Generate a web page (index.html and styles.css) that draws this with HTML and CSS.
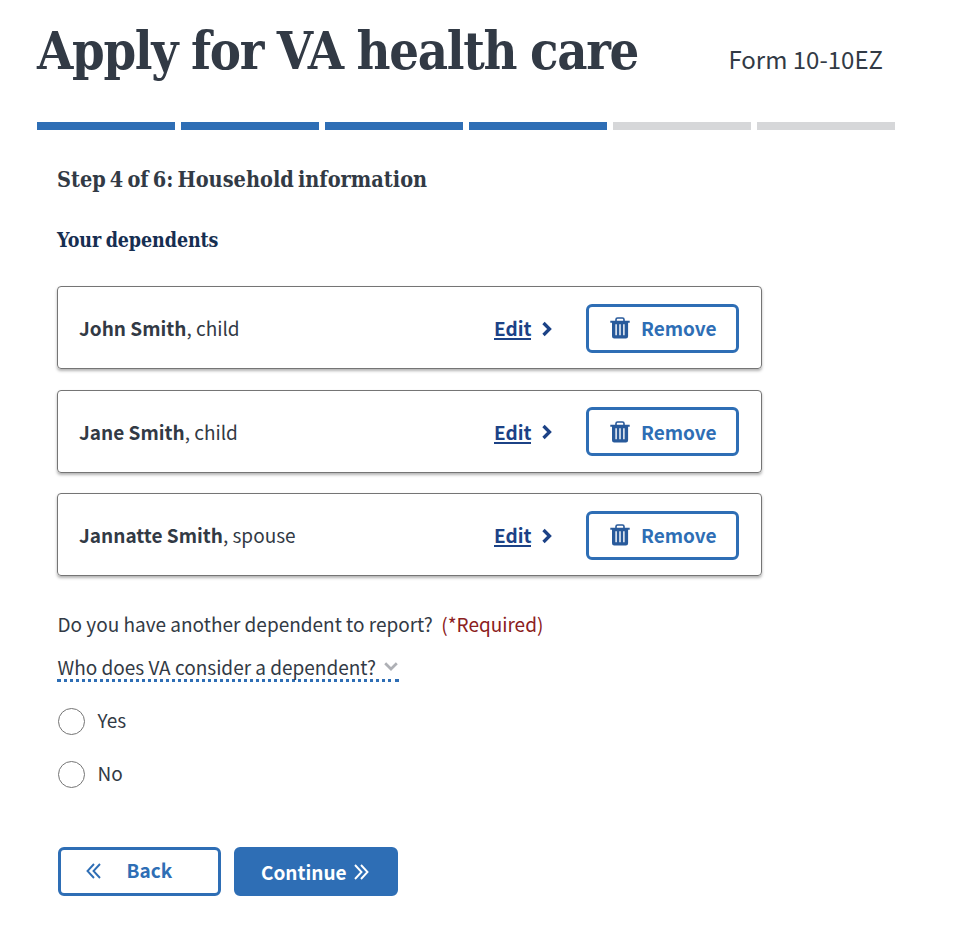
FILE: index.html
```html
<!DOCTYPE html>
<html lang="en">
<head>
<meta charset="utf-8">
<title>Apply for VA health care</title>
<link rel="stylesheet" href="styles.css">
</head>
<body>
<svg class="sprite" aria-hidden="true">
  <symbol id="trash" viewBox="0 0 20 22">
    <path d="M6 4V2.6Q6 1 7.6 1h4.8Q14 1 14 2.6V4" fill="none" stroke="currentColor" stroke-width="1.6"/>
    <path fill="currentColor" fill-rule="evenodd" d="M.3 3.700h19.400v2h-1.600v13.500q0 2.200-2.200 2.200H4.200q-2.200 0-2.200-2.200V5.700H.3zM5.400 7.200v11.100h1.400V7.200zm3.900 0v11.100h1.400V7.200zm3.900 0v11.100h1.400V7.200z"/>
  </symbol>
  <symbol id="chevron" viewBox="0 0 10 16">
    <path d="M1.500 2l6 6-6 6" fill="none" stroke="currentColor" stroke-width="3.300"/>
  </symbol>
  <symbol id="double" viewBox="0 0 15 16">
    <path d="M1 1l6.500 7L1 15M7 1l6.500 7L7 15" fill="none" stroke="currentColor" stroke-width="1.900"/>
  </symbol>
</svg>
<main class="page">
  <header class="header">
    <h1 class="title">Apply for VA health care</h1>
    <span class="form-number">Form 10-10EZ</span>
  </header>
  <div class="progress">
    <i class="done"></i><i class="done"></i><i class="done"></i><i class="done"></i><i></i><i></i>
  </div>
  <section class="content">
    <h2 class="step">Step 4 of 6: Household information</h2>
    <h3 class="subhead">Your dependents</h3>
    <ul class="cards">
      <li class="card">
        <span class="person"><b>John Smith</b>, child</span>
        <a class="edit"><span>Edit</span><svg><use href="#chevron"/></svg></a>
        <button class="btn remove"><svg><use href="#trash"/></svg>Remove</button>
      </li>
      <li class="card">
        <span class="person"><b>Jane Smith</b>, child</span>
        <a class="edit"><span>Edit</span><svg><use href="#chevron"/></svg></a>
        <button class="btn remove"><svg><use href="#trash"/></svg>Remove</button>
      </li>
      <li class="card">
        <span class="person"><b>Jannatte Smith</b>, spouse</span>
        <a class="edit"><span>Edit</span><svg><use href="#chevron"/></svg></a>
        <button class="btn remove"><svg><use href="#trash"/></svg>Remove</button>
      </li>
    </ul>
    <p class="question"><span>Do you have another dependent to report?</span><span class="required">(*Required)</span></p>
    <div class="help"><span>Who does VA consider a dependent?</span><svg viewBox="0 0 14 9"><path d="M1.200 1.200L7 7l5.800-5.800" fill="none" stroke="currentColor" stroke-width="2.700"/></svg></div>
    <label class="option"><input type="radio" name="another"><span>Yes</span></label>
    <label class="option"><input type="radio" name="another"><span>No</span></label>
    <div class="actions">
      <button class="btn back"><svg><use href="#double"/></svg><span>Back</span></button>
      <button class="btn continue"><span>Continue</span><svg><use href="#double"/></svg></button>
    </div>
  </section>
</main>
</body>
</html>
```
FILE: styles.css
```css
* { box-sizing: border-box; }
body {
  margin: 0;
  background: #fff;
  color: #323a45;
  font: 19px/28px "Noto Sans CJK SC", "Noto Sans", sans-serif;
}
h1, h2, h3, p, ul { margin: 0; padding: 0; }
.sprite { display: none; }
.page { width: 859px; margin-left: 37px; }
.header {
  display: flex;
  align-items: baseline;
  justify-content: space-between;
  height: 122px;
  padding: 16px 13px 0 0;
}
.title, .step, .subhead {
  font-family: "DejaVu Serif Condensed", "DejaVu Serif", serif;
  font-stretch: condensed;
  font-weight: 700;
  white-space: nowrap;
}
.title { font-size: 52px; line-height: 70px; letter-spacing: -1.300px; word-spacing: -1.200px; }
.form-number { font-size: 24px; white-space: nowrap; }
.progress { display: grid; grid-template-columns: repeat(6, 138px); column-gap: 6px; height: 8px; }
.progress i { background: #d6d7d9; }
.progress .done { background: #2e6eb5; }
.content { width: 705px; margin-left: 20px; padding-top: 36px; }
.step { font-size: 21.500px; line-height: 28px; letter-spacing: 0.020px; word-spacing: -2.700px; }
.subhead { margin-top: 33px; font-size: 19.500px; line-height: 28px; letter-spacing: -0.100px; word-spacing: -1.500px; color: #162e51; }
.cards { list-style: none; display: grid; row-gap: 20.500px; margin-top: 31px; }
.card {
  display: grid;
  grid-template-columns: 1fr 92px 153px;
  align-items: center;
  height: 83px;
  padding: 1px 22px 0 21px;
  border: 1px solid #757575;
  border-radius: 4px;
  box-shadow: 0 2px 3px rgba(0, 0, 0, .3);
}
.person { white-space: nowrap; }
.edit { display: flex; align-items: center; gap: 10px; padding-top: 1px; color: #1c4286; font-weight: 700; }
.edit span { border-bottom: 2px solid; line-height: 21px; }
.edit svg { width: 10px; height: 16px; margin-left: 1px; }
.btn {
  display: flex;
  align-items: center;
  height: 49px;
  border: 3px solid #2e6eb5;
  border-radius: 6px;
  background: #fff;
  color: #2e6eb5;
  font: 700 19px/28px "Noto Sans CJK SC", "Noto Sans", sans-serif;
}
.remove { width: 153px; padding: 0 0 0 21px; gap: 11px; }
.remove svg { width: 20px; height: 22px; color: #285a9b; }
.question { display: flex; gap: 8.500px; margin-top: 34px; padding-left: 0.500px; white-space: nowrap; }
.required { color: #8b2020; }
.help {
  display: flex;
  align-items: center;
  gap: 8.500px;
  width: 342px;
  height: 28px;
  margin-top: 16px;
  padding-left: 0.500px;
  border-bottom: 3px dotted #2e6eb5;
  white-space: nowrap;
}
.help svg { width: 14px; height: 9px; color: #aeb0b5; }
.option { display: flex; align-items: center; gap: 13px; height: 27px; margin-top: 26px; padding-left: 0.500px; }
.option span { padding-bottom: 3px; }
.option input {
  appearance: none;
  width: 27px;
  height: 27px;
  margin: 0;
  border: 1.500px solid #757575;
  border-radius: 50%;
}
.actions { display: flex; gap: 13px; margin-top: 58.500px; padding-left: 0.500px; }
.back { width: 163.500px; padding: 0 0 0 25px; gap: 26px; }
.back span { padding-bottom: 2px; }
.continue { width: 164px; padding: 2px 0 0 24px; gap: 7px; background: #2e6eb5; color: #fff; }
.actions svg { width: 15px; height: 16px; }
.back svg { transform: scaleX(-1); }
```
